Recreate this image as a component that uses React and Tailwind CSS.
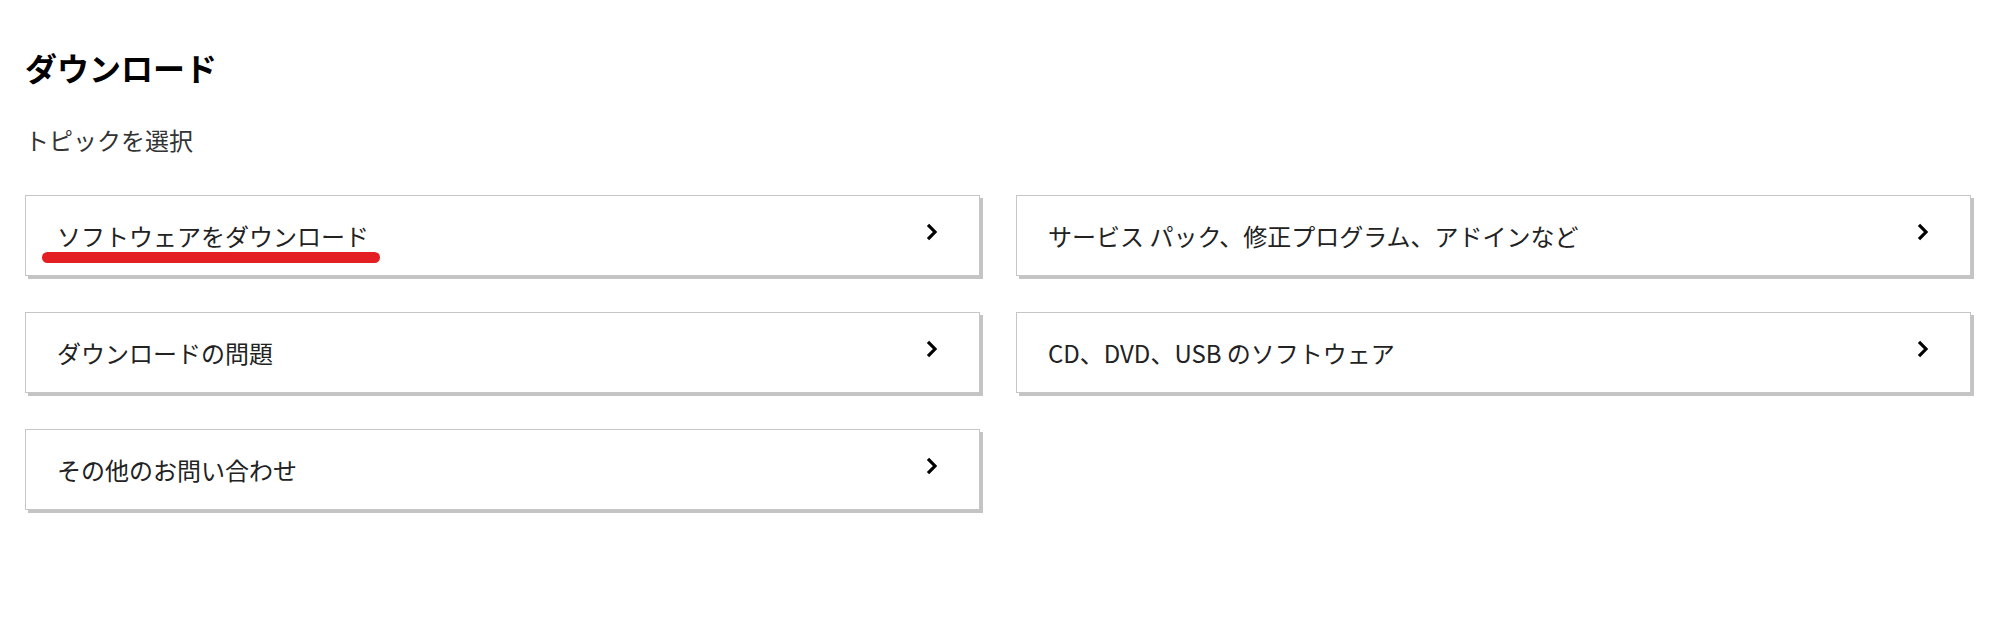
import React from "react";

const FONT = { fontFamily: '"Noto Sans CJK JP", "Noto Sans", sans-serif' };

function Chevron() {
  return (
    <svg width="12" height="18" viewBox="0 0 12 18" className="mb-[7px] shrink-0" aria-hidden="true">
      <path d="M2 1.8 L9 9 L2 16.2" fill="none" stroke="#000" strokeWidth="3.2" strokeLinejoin="miter" />
    </svg>
  );
}

function Card({ label, children }) {
  return (
    <a
      href="#"
      className="relative flex h-[81px] items-center justify-between border border-[#c6c6c6] bg-white pl-[31px] pr-[41px] text-[24px] leading-[24px] text-[#222] shadow-[3px_3px_0_#c4c4c4]"
    >
      <span>{label}</span>
      <Chevron />
      {children}
    </a>
  );
}

export default function App() {
  return (
    <div className="min-h-[624px] bg-white pl-[25px] pt-[51px]" style={FONT}>
      <h1 className="text-[32px] font-bold leading-[32px] text-black">ダウンロード</h1>
      <p className="mt-[45px] text-[24px] leading-[24px] text-[#333]">トピックを選択</p>
      <div className="mt-[43px] grid w-[1946px] grid-cols-2 gap-x-[36px] gap-y-[36px]">
        <Card label="ソフトウェアをダウンロード">
          <span className="absolute left-[16px] top-[56px] h-[11px] w-[338px] rounded-full bg-[#e41f23]" />
        </Card>
        <Card label="サービス パック、修正プログラム、アドインなど" />
        <Card label="ダウンロードの問題" />
        <Card label="CD、DVD、USB のソフトウェア" />
        <Card label="その他のお問い合わせ" />
      </div>
    </div>
  );
}
